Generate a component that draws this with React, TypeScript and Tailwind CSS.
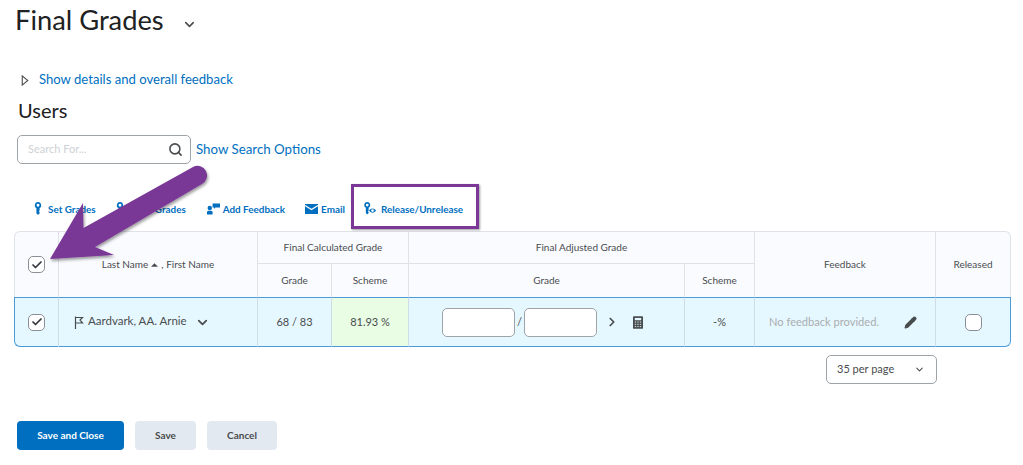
import { Search, Check, ChevronDown, ChevronRight, Pencil } from 'lucide-react'

const font = { fontFamily: 'Lato, "Noto Sans", sans-serif' }

function KeyIcon({ className = '' }: { className?: string }) {
  return (
    <svg viewBox="0 0 10 16" className={className} fill="#006fbf">
      <path d="M5 0a4 4 0 0 0-2 7.500V14l2 2 2-2v-1.500L6 11.500l1-1V7.500A4 4 0 0 0 5 0zm0 2.200a1.800 1.800 0 1 1 0 3.600 1.800 1.800 0 0 1 0-3.600z" />
    </svg>
  )
}

function FeedbackIcon() {
  return (
    <svg viewBox="0 0 14 12" className="w-[13px] h-[12px]" fill="#006fbf">
      <circle cx="3" cy="5" r="2.400" />
      <path d="M0 12V9.500C0 8.400 1 8 3 8s3 .4 3 1.500V12z" />
      <path d="M6 0h8v4.500H9L7.500 6V4.500H6z" />
    </svg>
  )
}

function MailIcon() {
  return (
    <svg viewBox="0 0 13 10" className="w-[13px] h-[10px]">
      <path d="M0 0h13v10H0z" fill="#006fbf" />
      <path d="M0 1.500l6.500 4 6.500-4" fill="none" stroke="white" strokeWidth="1.200" />
    </svg>
  )
}

function ReleaseIcon() {
  return (
    <svg viewBox="0 0 13 14" className="w-[12px] h-[13px]" fill="#006fbf">
      <path d="M3.500 0a3.300 3.300 0 0 0-1.500 6.200V12l1.500 1.500L5 12v-1.200L4.300 10l.7-.8V6.200A3.300 3.300 0 0 0 3.500 0zm0 1.800a1.500 1.500 0 1 1 0 3 1.500 1.500 0 0 1 0-3z" />
      <path fillRule="evenodd" d="M5.500 9.300c1.800-3 5.700-3 7.500 0-1.800 3-5.700 3-7.500 0zm3.750-1.500a1.500 1.500 0 1 0 0 3 1.500 1.500 0 0 0 0-3z" />
    </svg>
  )
}

function FlagIcon() {
  return (
    <svg viewBox="0 0 10 13" className="w-[10px] h-[13px] mr-[4px]" fill="none" stroke="#494c4e" strokeWidth="1.200">
      <path d="M1.500 0.500V13" />
      <path d="M1.500 1.500h7L6 4l2.500 3h-7" />
    </svg>
  )
}

function CalcIcon() {
  return (
    <svg viewBox="0 0 11 14" className="w-[10px] h-[13px] ml-[14px]">
      <rect width="11" height="14" rx="1" fill="#494c4e" />
      <rect x="2" y="2" width="7" height="2.500" fill="#e6f8ff" />
      <path d="M2 6.500h1.500M4.750 6.500h1.500M7.500 6.500H9M2 9h1.500M4.750 9h1.500M7.500 9H9M2 11.500h1.500M4.750 11.500h1.500M7.500 11.500H9" stroke="#e6f8ff" strokeWidth="1" />
    </svg>
  )
}

function Box({ checked }: { checked?: boolean }) {
  return (
    <div className="w-[17px] h-[17px] rounded-[5px] border border-[#8a8f96] bg-white flex items-center justify-center">
      {checked && <Check size={12} strokeWidth={3.500} color="#34383c" />}
    </div>
  )
}

function ToolItem({ icon, label, className = '' }: { icon: React.ReactNode; label: string; className?: string }) {
  return (
    <div className={`flex items-center text-[9.900px] font-bold text-[#006fbf] ${className}`}>
      {icon}
      <span>{label}</span>
    </div>
  )
}

const headCell = 'bg-[#fafbff] flex items-center justify-center text-[10px] text-[#494c4e] border-[#dfe3e8]'
const rowCell = 'bg-[#e6f8ff] flex items-center justify-center text-[11px] text-[#494c4e] border-[#cfdde6] border-r'

export default function App() {
  return (
    <div className="relative w-[1023px] h-[465px] overflow-hidden bg-white" style={font}>
      <div className="flex items-center pl-[15px] h-[40px]">
        <h1 className="text-[27.300px] leading-[40px] text-[#202122]">Final Grades</h1>
        <ChevronDown size={15} strokeWidth={2.500} color="#494c4e" className="ml-[18px] mt-[8px]" />
      </div>

      <div className="flex items-center mt-[31px] pl-[21px] h-[18px]">
        <svg viewBox="0 0 8 12" className="w-[8px] h-[11px]" fill="none" stroke="#494c4e" strokeWidth="1.200">
          <path d="M1 1l6 5-6 5z" />
        </svg>
        <span className="ml-[10px] text-[13.100px] text-[#006fbf]">Show details and overall feedback</span>
      </div>

      <h2 className="mt-[7px] pl-[18px] text-[20px] leading-[28px] text-[#202122]">Users</h2>

      <div className="flex items-center mt-[11px] pl-[17px]">
        <div className="w-[174px] h-[29px] rounded-[5px] border border-[#9ea3a8] flex items-center justify-between pl-[10px] pr-[7px]">
          <span className="text-[11px] text-[#cdd2d6]">Search For...</span>
          <Search size={15} strokeWidth={2.500} color="#494c4e" />
        </div>
        <span className="ml-[5px] text-[13.300px] text-[#006fbf]">Show Search Options</span>
      </div>

      <div className="flex items-center mt-[36px] pl-[34px] h-[18px]">
        <ToolItem icon={<KeyIcon className="w-[8px] h-[13px] mr-[6px]" />} label="Set Grades" />
        <ToolItem icon={<KeyIcon className="w-[8px] h-[13px] mr-[6px]" />} label="Clear Grades" className="ml-[20px]" />
        <ToolItem icon={<span className="mr-[3px]"><FeedbackIcon /></span>} label="Add Feedback" className="ml-[21px]" />
        <ToolItem icon={<span className="mr-[3px]"><MailIcon /></span>} label="Email" className="ml-[20px]" />
        <ToolItem icon={<span className="mr-[5px]"><ReleaseIcon /></span>} label="Release/Unrelease" className="ml-[19px]" />
      </div>

      <div className="mt-[13px] ml-[14px] w-[997px] grid grid-cols-[45px_199px_74px_77px_276px_70px_181px_75px] grid-rows-[33px_33px_50px]">
        <div className={`${headCell} row-span-2 border-l border-t border-r rounded-tl-[6px]`}>
          <Box checked />
        </div>
        <div className={`${headCell} row-span-2 border-t border-r`}>
          <span>Last Name</span>
          <svg viewBox="0 0 8 4" className="w-[7px] h-[4px] mx-[3px]" fill="#494c4e"><path d="M4 0l4 4H0z" /></svg>
          <span>, First Name</span>
        </div>
        <div className={`${headCell} col-span-2 border-t border-r border-b`}>Final Calculated Grade</div>
        <div className={`${headCell} col-span-2 border-t border-r border-b`}>Final Adjusted Grade</div>
        <div className={`${headCell} row-span-2 border-t border-r`}>Feedback</div>
        <div className={`${headCell} row-span-2 border-t border-r rounded-tr-[6px]`}>Released</div>
        <div className={`${headCell} border-r`}>Grade</div>
        <div className={`${headCell} border-r`}>Scheme</div>
        <div className={`${headCell} border-r`}>Grade</div>
        <div className={`${headCell} border-r`}>Scheme</div>

        <div className={`${rowCell} border-y border-y-[#4a9bd8] border-l border-l-[#4a9bd8] rounded-bl-[6px]`}>
          <Box checked />
        </div>
        <div className={`${rowCell} border-y border-y-[#4a9bd8] justify-start pl-[15px]`}>
          <FlagIcon />
          <span className="text-[11.500px] -mt-[2px]">Aardvark, AA. Arnie</span>
          <ChevronDown size={15} strokeWidth={2.800} color="#494c4e" className="ml-[8px]" />
        </div>
        <div className={`${rowCell} border-y border-y-[#4a9bd8]`}>68 / 83</div>
        <div className={`${rowCell} border-y border-y-[#4a9bd8] bg-[#e8fde4]`}>81.93 %</div>
        <div className={`${rowCell} border-y border-y-[#4a9bd8] justify-start pl-[33px]`}>
          <div className="w-[73px] h-[29px] rounded-[5px] border border-[#9ea3a8] bg-white" />
          <span className="w-[9px] text-center text-[11px]">/</span>
          <div className="w-[73px] h-[29px] rounded-[5px] border border-[#9ea3a8] bg-white" />
          <ChevronRight size={14} strokeWidth={3} color="#494c4e" className="ml-[8px]" />
          <CalcIcon />
        </div>
        <div className={`${rowCell} border-y border-y-[#4a9bd8]`}>-%</div>
        <div className={`${rowCell} border-y border-y-[#4a9bd8] justify-start pl-[14px]`}>
          <span className="text-[11.100px] text-[#a9adb1]">No feedback provided.</span>
          <Pencil size={13} fill="#494c4e" color="#494c4e" className="ml-[25px]" />
        </div>
        <div className="bg-[#e6f8ff] flex items-center justify-center border-y border-r border-[#4a9bd8] rounded-br-[6px]">
          <Box />
        </div>
      </div>

      <div className="flex mt-[8px] ml-[826px]">
        <div className="w-[111px] h-[29px] rounded-[5px] border border-[#9ea3a8] flex items-center justify-between pl-[10px] pr-[11px] text-[11px] text-[#494c4e]">
          <span>35 per page</span>
          <ChevronDown size={11} strokeWidth={2.200} color="#494c4e" />
        </div>
      </div>

      <div className="flex mt-[37px] ml-[17px] gap-[11px] text-[10px] font-bold">
        <div className="w-[107px] h-[29px] rounded-[4px] bg-[#006fbf] text-white flex items-center justify-center">Save and Close</div>
        <div className="w-[61px] h-[29px] rounded-[4px] bg-[#e3e9f1] text-[#494c4e] flex items-center justify-center">Save</div>
        <div className="w-[70px] h-[29px] rounded-[4px] bg-[#e3e9f1] text-[#494c4e] flex items-center justify-center">Cancel</div>
      </div>

      {/* highlight box round Release/Unrelease */}
      <div className="absolute left-[351px] top-[184px] w-[128px] h-[45px] border-[3px] border-[#7a3796] shadow-[1px_1px_2px_rgba(0,0,0,0.4)]" />

      {/* arrow pointing at the select-all checkbox */}
      <svg className="absolute left-0 top-0 pointer-events-none" width="1023" height="465" viewBox="0 0 1023 465">
        <defs>
          <filter id="arrowShadow" x="-20%" y="-20%" width="140%" height="140%">
            <feDropShadow dx="1" dy="2" stdDeviation="1.500" floodColor="#000" floodOpacity="0.4" />
          </filter>
        </defs>
        <path
          d="M50 259 L83 203 L83.500 228 L193 167 A9.500 9.500 0 0 1 202 184 L95 247 L114 255 Z"
          fill="#7a3796"
          filter="url(#arrowShadow)"
        />
      </svg>
    </div>
  )
}
